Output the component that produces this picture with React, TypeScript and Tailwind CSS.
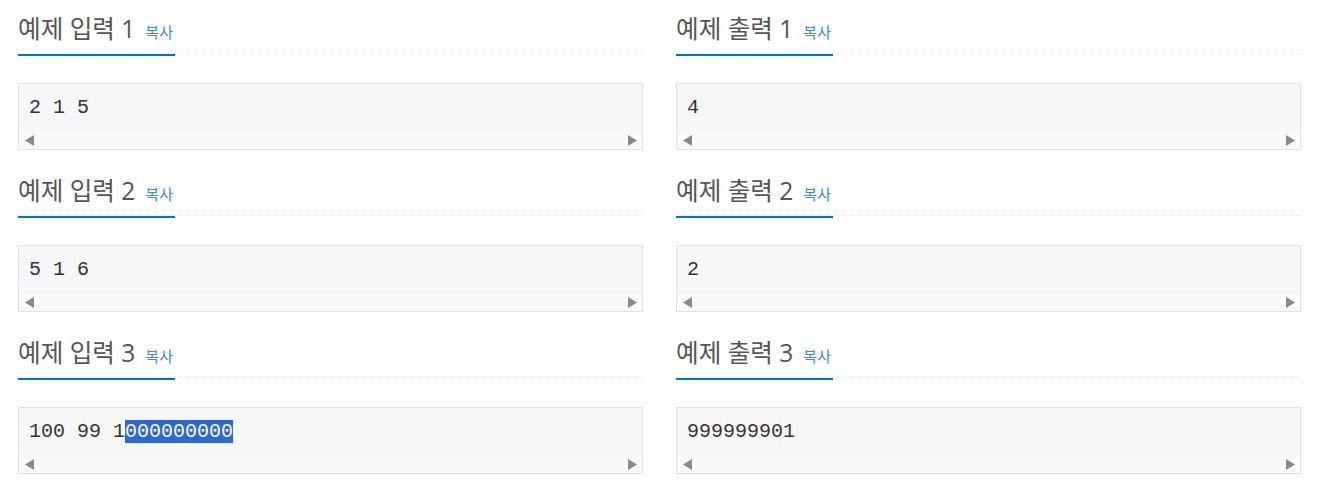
const samples = [
  { input: '2 1 5', output: '4' },
  { input: '5 1 6', output: '2' },
  { input: '100 99 1000000000', output: '999999901', highlight: 8 },
];

function Arrow({ dir }: { dir: 'left' | 'right' }) {
  return (
    <svg width="9" height="11" viewBox="0 0 9 11" className="block">
      {dir === 'left' ? (
        <polygon points="9,0 9,11 0,5.5" fill="#8a8a8a" />
      ) : (
        <polygon points="0,0 0,11 9,5.5" fill="#8a8a8a" />
      )}
    </svg>
  );
}

function Sample({ title, text, highlight }: { title: string; text: string; highlight?: number }) {
  return (
    <section className="mb-[12px]">
      <div className="h-[54px] border-b border-dotted border-[#e4e9f0]">
        <h2
          className="inline-block h-[56px] border-b-2 border-[#0076c0] pt-[16px] pr-[2px] text-[24.6px] leading-[26px] text-[#555] font-normal whitespace-nowrap"
          style={{ fontFamily: '"Open Sans", "Noto Sans CJK KR", sans-serif' }}
        >
          {title}
          <span className="ml-[10px] text-[15px] leading-none text-[#428bca]">복사</span>
        </h2>
      </div>
      <div className="mt-[29px] border border-[#e1e1e8] bg-[#f7f7f9]">
        <pre className="px-[10px] pt-[9px] pb-[10px] text-[20px] leading-[29px] text-[#333]" style={{ fontFamily: '"Liberation Mono", monospace' }}>
          {highlight !== undefined ? (
            <>
              {text.slice(0, highlight)}
              <span className="bg-[#3366d1] text-white">{text.slice(highlight)}</span>
            </>
          ) : (
            text
          )}
        </pre>
        <div className="flex h-[17px] items-center justify-between bg-[#fafafa] pl-[6px] pr-[5px]">
          <Arrow dir="left" />
          <Arrow dir="right" />
        </div>
      </div>
    </section>
  );
}

export default function App() {
  return (
    <div className="min-h-screen bg-white px-[18px]">
      <div className="grid grid-cols-2 gap-x-[33px]">
        {samples.map((s, i) => (
          <div key={i} className="contents">
            <Sample title={`예제 입력 ${i + 1}`} text={s.input} highlight={s.highlight} />
            <Sample title={`예제 출력 ${i + 1}`} text={s.output} />
          </div>
        ))}
      </div>
    </div>
  );
}
